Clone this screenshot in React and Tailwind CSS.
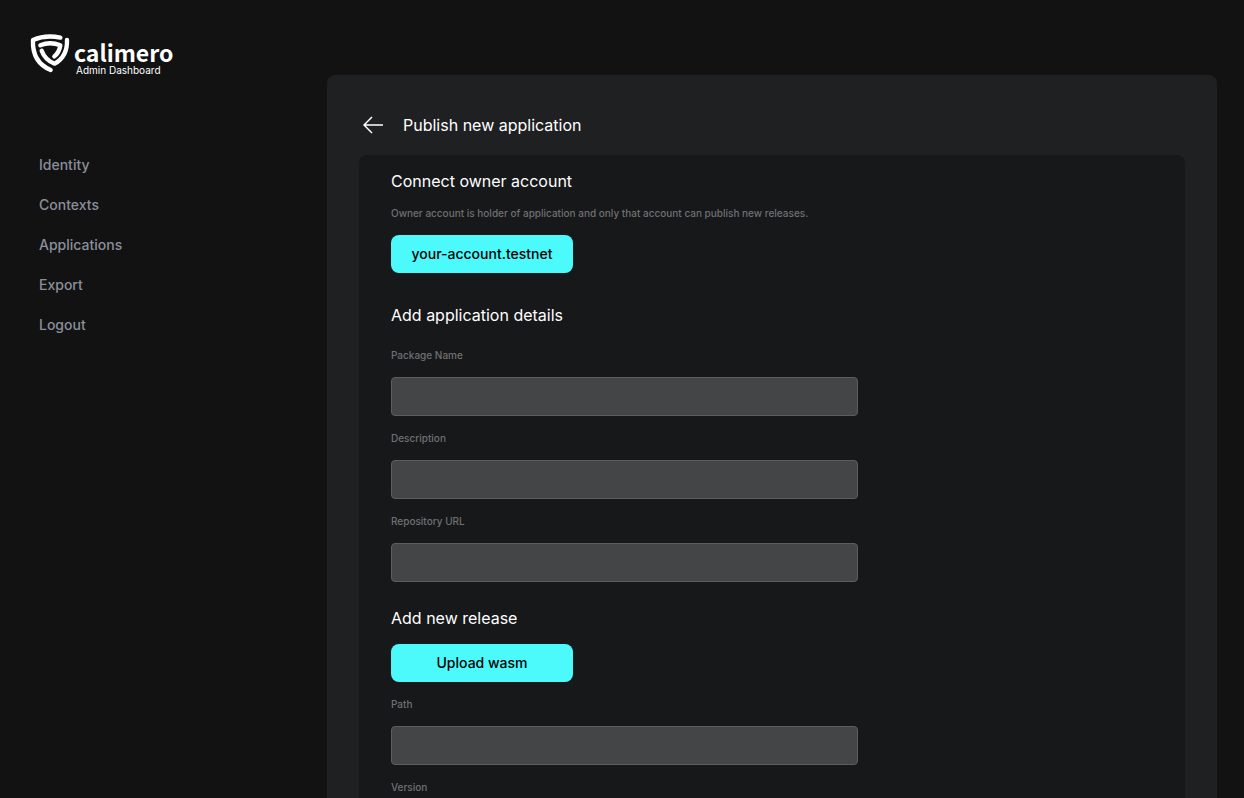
const navItems = ["Identity", "Contexts", "Applications", "Export", "Logout"];

function Logo() {
  return (
    <div className="flex">
      <svg
        className="h-[46px] w-[46px] shrink-0"
        viewBox="0 0 138 138"
        fill="none"
        stroke="#fff"
        strokeWidth="13"
        strokeLinecap="round"
        strokeLinejoin="round"
        aria-hidden="true"
      >
        <path d="M97 23C70 17 40 19 15 30C13 73 30 104 68 120" />
        <path d="M117 30C118 62 107 86 80 101C62 94 48 81 41 62" />
        <path d="M37 46C56 38 77 38 97 46C95 60 89 71 79 79" />
      </svg>
      <div className="pt-2.5">
        <div className="font-['Noto_Sans_CJK_SC',sans-serif] text-[23px] leading-6 font-bold">calimero</div>
        <div className="pl-0.5 text-[10px] leading-3">Admin Dashboard</div>
      </div>
    </div>
  );
}

function Heading({ children, className = "" }) {
  return <h2 className={`text-base leading-6 font-normal ${className}`}>{children}</h2>;
}

function ActionButton({ children }) {
  return (
    <button
      type="button"
      className="mt-3.5 h-[38px] w-[182px] rounded-lg bg-[#4cfafc] text-sm font-medium text-black"
    >
      {children}
    </button>
  );
}

function Field({ id, label }) {
  return (
    <div className="mt-3.5">
      <label htmlFor={id} className="block text-[10px] leading-4 font-medium text-[#6f7072]">
        {label}
      </label>
      <input
        id={id}
        type="text"
        className="mt-3.5 block h-[39px] w-full max-w-[467px] rounded border border-[#5c5d5f] bg-[#444546] px-3 text-sm text-white"
      />
    </div>
  );
}

export default function App() {
  return (
    <div className="flex h-screen overflow-hidden bg-[#121212] font-['Inter',sans-serif] text-white">
      <aside className="w-[327px] shrink-0 pt-[30px] pl-7">
        <Logo />
        <nav className="mt-[79px] flex flex-col gap-5 pl-[11px]">
          {navItems.map((item) => (
            <a key={item} href="#" className="text-sm leading-5 font-medium text-[#8b8f9b]">
              {item}
            </a>
          ))}
        </nav>
      </aside>
      <main className="mt-[75px] mr-[27px] flex-1 rounded-t-lg bg-[#1f2022] px-8 pt-[34px]">
        <header className="flex items-center gap-5 pl-1">
          <button type="button" aria-label="Back">
            <svg className="h-8 w-5" viewBox="0 0 20 32" fill="none" stroke="#fff" strokeWidth="1.5" aria-hidden="true">
              <path d="M20 16H1M9 8L1 16L9 24" />
            </svg>
          </button>
          <h1 className="text-base leading-6 font-normal">Publish new application</h1>
        </header>
        <form className="mt-3.5 rounded-lg bg-[#17181a] px-8 pt-3.5 pb-8">
          <Heading>Connect owner account</Heading>
          <p className="mt-3 text-[10px] leading-4 font-medium text-[#6f7072]">
            Owner account is holder of application and only that account can publish new releases.
          </p>
          <ActionButton>your-account.testnet</ActionButton>
          <Heading className="mt-[30px] mb-5">Add application details</Heading>
          <Field id="package" label="Package Name" />
          <Field id="description" label="Description" />
          <Field id="repository" label="Repository URL" />
          <Heading className="mt-6">Add new release</Heading>
          <ActionButton>Upload wasm</ActionButton>
          <Field id="path" label="Path" />
          <Field id="version" label="Version" />
        </form>
      </main>
    </div>
  );
}
